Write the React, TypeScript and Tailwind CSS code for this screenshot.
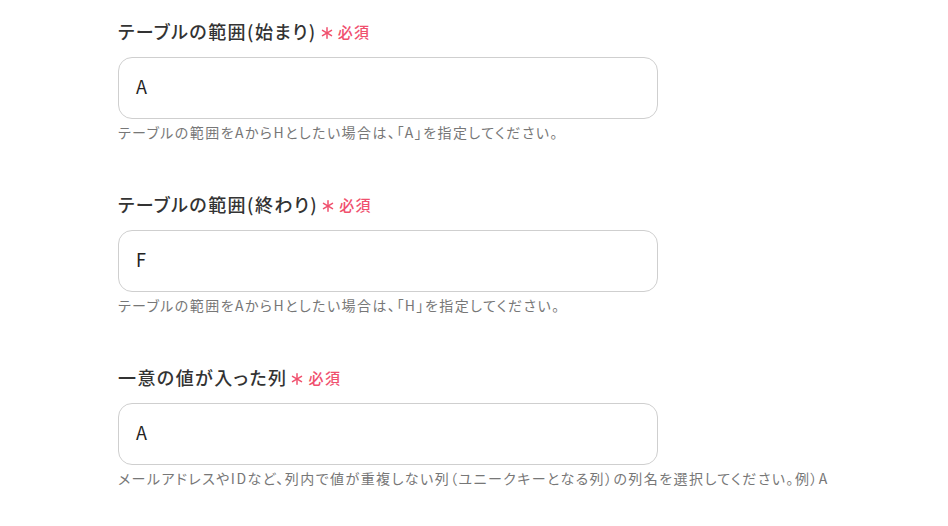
import React from "react";

const fields = [
  {
    label: "テーブルの範囲(始まり)",
    value: "A",
    help: "テーブルの範囲をAからHとしたい場合は、「A」を指定してください。",
  },
  {
    label: "テーブルの範囲(終わり)",
    value: "F",
    help: "テーブルの範囲をAからHとしたい場合は、「H」を指定してください。",
  },
  {
    label: "一意の値が入った列",
    value: "A",
    help: "メールアドレスやIDなど、列内で値が重複しない列（ユニークキーとなる列）の列名を選択してください。例）A",
  },
];

function Asterisk() {
  return (
    <svg width="12" height="12" viewBox="0 0 12 12" className="text-[#f0506e]">
      <g stroke="currentColor" strokeWidth="1.5" strokeLinecap="round">
        <line x1="6" y1="0.8" x2="6" y2="11.2" />
        <line x1="1.5" y1="3.4" x2="10.5" y2="8.6" />
        <line x1="10.5" y1="3.4" x2="1.5" y2="8.6" />
      </g>
    </svg>
  );
}

export default function App() {
  return (
    <div
      className="min-h-screen bg-white pl-[118px] pt-[19px] tracking-[0.09em] [font-feature-settings:'palt']"
      style={{ fontFamily: '"Noto Sans CJK JP", "Noto Sans", sans-serif' }}
    >
      {fields.map((f, i) => (
        <div key={i} className="mb-[50px] w-[540px]">
          <div className="flex h-[24px] items-center">
            <span className="text-[18px] font-medium leading-[24px] text-[#333]">{f.label}</span>
            <span className="ml-[4px] mt-[4px] flex items-center">
              <Asterisk />
            </span>
            <span className="ml-[5px] mt-[1px] text-[15px] font-medium leading-[24px] text-[#f0506e]">必須</span>
          </div>
          <div className="mt-[14px] flex h-[62px] items-center rounded-[14px] border border-[#cfcfcf] px-[17px] pb-[3px]">
            <span className="text-[18px] text-[#222]">{f.value}</span>
          </div>
          <p className="mt-[3px] whitespace-nowrap text-[14px] leading-[20px] text-[#777]">{f.help}</p>
        </div>
      ))}
    </div>
  );
}
